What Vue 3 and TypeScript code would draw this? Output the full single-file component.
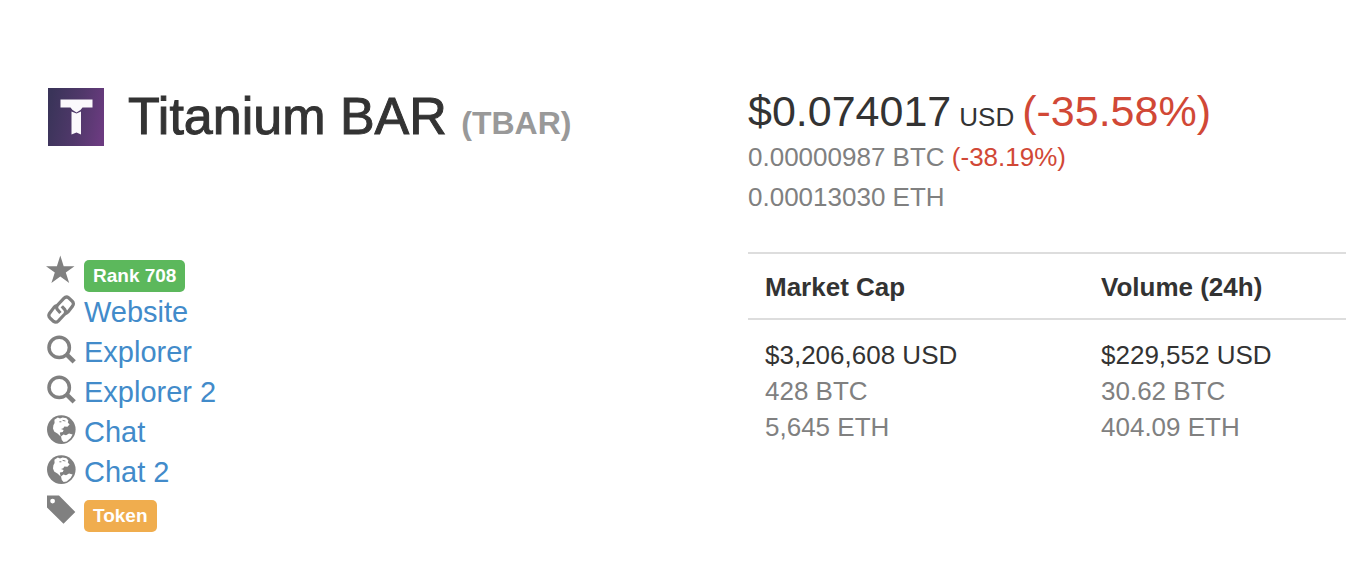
<script setup lang="ts">
interface InfoRow {
  icon: 'star' | 'link' | 'search' | 'globe' | 'tag'
  text: string
  badge?: 'success' | 'warning'
}

interface Market {
  title: string
  usd: string
  btc: string
  eth: string
}

const rows: InfoRow[] = [
  { icon: 'star', text: 'Rank 708', badge: 'success' },
  { icon: 'link', text: 'Website' },
  { icon: 'search', text: 'Explorer' },
  { icon: 'search', text: 'Explorer 2' },
  { icon: 'globe', text: 'Chat' },
  { icon: 'globe', text: 'Chat 2' },
  { icon: 'tag', text: 'Token', badge: 'warning' },
]

const markets: Market[] = [
  { title: 'Market Cap', usd: '$3,206,608 USD', btc: '428 BTC', eth: '5,645 ETH' },
  { title: 'Volume (24h)', usd: '$229,552 USD', btc: '30.62 BTC', eth: '404.09 ETH' },
]
</script>

<template>
  <main class="page">
    <header class="coin">
      <svg class="logo" viewBox="0 0 56 58" role="img" aria-label="Titanium BAR logo">
        <defs>
          <linearGradient id="logo-fill" x1="0" y1="0.4" x2="1" y2="0.6">
            <stop offset="0" stop-color="#3a3459" />
            <stop offset="0.55" stop-color="#51386b" />
            <stop offset="1" stop-color="#6b3b80" />
          </linearGradient>
        </defs>
        <rect width="56" height="58" fill="url(#logo-fill)" />
        <path
          d="M12.5 11.5H44.5V19.5H34.5L32.5 22L28.5 24.5L24.5 22L22.5 19.5H12.5Z M23.5 23.5L28.5 25.5L33 23.5V46.5L28.5 44.5L23.5 46.5Z"
          fill="#fbf9fc"
        />
      </svg>
      <h1 class="name">Titanium BAR <small class="symbol">(TBAR)</small></h1>
    </header>

    <section class="price" aria-label="Price">
      <div class="price-main">
        <span class="amount">$0.074017</span>
        <span class="unit">USD</span>
        <span class="amount drop">(-35.58%)</span>
      </div>
      <div class="price-alt">0.00000987 BTC <span class="drop">(-38.19%)</span></div>
      <div class="price-alt">0.00013030 ETH</div>
    </section>

    <ul class="info">
      <li v-for="row in rows" :key="row.text" class="info-row">
        <svg class="icon" viewBox="0 0 30 30" aria-hidden="true">
          <path
            v-if="row.icon === 'star'"
            d="M14.3 0.5L17.7 11.3H28.5L19.8 17.6L23.2 28L14.3 21.4L5.4 28L8.8 17.6L0 11.3H10.9Z"
            fill="currentColor"
          />
          <g
            v-else-if="row.icon === 'link'"
            fill="none"
            stroke="currentColor"
            stroke-width="3.2"
          >
            <path d="M19.2 18.6Q21 18.2 22.2 16.8L26.6 11Q28.4 8.2 26 6L22.6 2.8Q20.2 1 17.8 3.4L11.4 10.2Q9.8 12.4 11.4 14.6L14.4 18" />
            <path d="M11 10.6Q9.2 11 8 12.4L3.6 18.2Q1.8 21 4.2 23.2L7.6 26.4Q10 28.2 12.4 25.8L18.8 19Q20.4 16.8 18.8 14.6L15.8 11.2" />
          </g>
          <g
            v-else-if="row.icon === 'search'"
            fill="none"
            stroke="currentColor"
          >
            <circle cx="13.2" cy="12.4" r="10.2" stroke-width="3.5" />
            <path d="M20 18.8L28.2 26.8" stroke-width="4.6" />
          </g>
          <g v-else-if="row.icon === 'globe'">
            <circle cx="15.3" cy="14.6" r="14.3" fill="currentColor" />
            <path
              d="M8.4 4.8L11.8 2.6L14 3.6L16.6 2.6L20.4 3.2L22.4 5.4L21.8 7.6L23.6 9.6L21.4 11.8L18.4 11.6L17.2 13.2L15 14L17.6 15L16.8 17L13.8 17.4L14.6 21.4L11.8 18.8L8.2 16.6L7 13.4L7.4 10.2L8.6 8Z M15 21.6L17.4 19.4L20 20.2L23 18.6L26.6 19.6L24.6 23L20.6 26.4L17.6 27L15.8 25Z"
              fill="#fff"
            />
            <path d="M13.4 6.8H15.4M16.6 5.4L19.4 6" fill="none" stroke="currentColor" />
          </g>
          <path
            v-else
            d="M1 0.5H13L29.3 17L17.5 28.8L1 12.5ZM6.6 3.7A2.4 2.4 0 1 0 6.6 8.5A2.4 2.4 0 1 0 6.6 3.7Z"
            fill="currentColor"
            fill-rule="evenodd"
          />
        </svg>
        <span v-if="row.badge" class="badge" :class="row.badge">{{ row.text }}</span>
        <a v-else class="link" href="#">{{ row.text }}</a>
      </li>
    </ul>

    <table class="stats">
      <thead>
        <tr>
          <th v-for="m in markets" :key="m.title" scope="col">{{ m.title }}</th>
        </tr>
      </thead>
      <tbody>
        <tr>
          <td v-for="m in markets" :key="m.title">
            {{ m.usd }}
            <div class="muted">{{ m.btc }}</div>
            <div class="muted">{{ m.eth }}</div>
          </td>
        </tr>
      </tbody>
    </table>
  </main>
</template>

<style>
body {
  margin: 0;
  background: #fff;
}
</style>

<style scoped>
.page {
  display: grid;
  grid-template-columns: 350fr 299fr;
  row-gap: 35px;
  align-items: start;
  padding: 85px 0 44px 48px;
  color: #333;
  font-family: "Liberation Sans", Arial, sans-serif;
  font-size: 26px;
}

.coin {
  display: flex;
  align-items: flex-start;
  gap: 24px;
}

.logo {
  flex: none;
  width: 56px;
  height: 58px;
  margin-top: 3px;
}

.name {
  margin: 0;
  font-size: 52px;
  font-weight: 500;
  line-height: 62px;
  white-space: nowrap;
  -webkit-text-stroke: 1px currentColor;
}

.symbol {
  color: #999;
  font-size: 32px;
  font-weight: 700;
  -webkit-text-stroke: 0;
}

.price {
  white-space: nowrap;
}

.price-main {
  display: flex;
  align-items: baseline;
  gap: 8px;
  line-height: 52px;
}

.amount {
  font-size: 43px;
}

.unit {
  line-height: 36px;
}

.price-alt {
  color: #808080;
  line-height: 40px;
}

.drop {
  color: #d14836;
}

.info {
  margin: 0;
  padding: 0;
  list-style: none;
}

.info-row {
  display: flex;
  align-items: flex-start;
  gap: 8px;
  height: 40px;
  margin-left: -2px;
}

.icon {
  flex: none;
  width: 30px;
  height: 30px;
  margin-top: 3px;
  color: #808080;
}

.link {
  color: #428bca;
  font-size: 29px;
  line-height: 40px;
  text-decoration: none;
}

.badge {
  align-self: flex-end;
  padding: 0 9px;
  border-radius: 5px;
  color: #fff;
  font-size: 19px;
  font-weight: 700;
  line-height: 32px;
}

.success {
  background: #5cb85c;
}

.warning {
  background: #f0ad4e;
}

.stats {
  width: 100%;
  border-spacing: 0;
  border-top: 2px solid #ddd;
  line-height: 36px;
  table-layout: fixed;
}

.stats th,
.stats td {
  padding: 15px 17px 13px;
  text-align: left;
  vertical-align: top;
}

.stats th {
  border-bottom: 2px solid #ddd;
}

.stats th:first-child {
  width: 302px;
}

.stats td {
  padding-top: 17px;
}

.muted {
  color: #808080;
}
</style>
